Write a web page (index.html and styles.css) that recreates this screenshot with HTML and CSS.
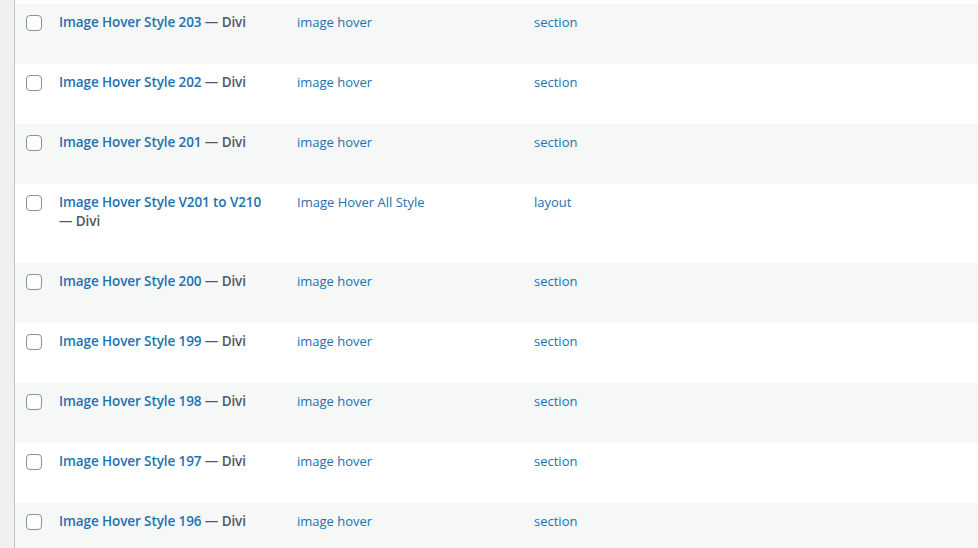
FILE: index.html
```html
<!DOCTYPE html>
<html lang="en">
<head>
    <meta charset="UTF-8">
    <meta name="viewport" content="width=device-width, initial-scale=1.0">
    <title>Divi Library</title>
    <link rel="stylesheet" href="styles.css">
</head>
<body>

<div class="admin-gap"></div>

<div class="list-wrap">
    <div class="list-top"></div>
    <table class="list-table">
        <tbody>
            <tr>
                <td class="check-col"><input type="checkbox"></td>
                <td class="title-col"><a href="#" class="row-title">Image Hover Style 203</a> <span class="post-state">—&nbsp;Divi</span></td>
                <td class="cat-col"><a href="#">image hover</a></td>
                <td class="type-col"><a href="#">section</a></td>
            </tr>
            <tr>
                <td class="check-col"><input type="checkbox"></td>
                <td class="title-col"><a href="#" class="row-title">Image Hover Style 202</a> <span class="post-state">—&nbsp;Divi</span></td>
                <td class="cat-col"><a href="#">image hover</a></td>
                <td class="type-col"><a href="#">section</a></td>
            </tr>
            <tr>
                <td class="check-col"><input type="checkbox"></td>
                <td class="title-col"><a href="#" class="row-title">Image Hover Style 201</a> <span class="post-state">—&nbsp;Divi</span></td>
                <td class="cat-col"><a href="#">image hover</a></td>
                <td class="type-col"><a href="#">section</a></td>
            </tr>
            <tr>
                <td class="check-col"><input type="checkbox"></td>
                <td class="title-col"><a href="#" class="row-title">Image Hover Style V201 to V210</a> <span class="post-state">—&nbsp;Divi</span></td>
                <td class="cat-col"><a href="#">Image Hover All Style</a></td>
                <td class="type-col"><a href="#">layout</a></td>
            </tr>
            <tr>
                <td class="check-col"><input type="checkbox"></td>
                <td class="title-col"><a href="#" class="row-title">Image Hover Style 200</a> <span class="post-state">—&nbsp;Divi</span></td>
                <td class="cat-col"><a href="#">image hover</a></td>
                <td class="type-col"><a href="#">section</a></td>
            </tr>
            <tr>
                <td class="check-col"><input type="checkbox"></td>
                <td class="title-col"><a href="#" class="row-title">Image Hover Style 199</a> <span class="post-state">—&nbsp;Divi</span></td>
                <td class="cat-col"><a href="#">image hover</a></td>
                <td class="type-col"><a href="#">section</a></td>
            </tr>
            <tr>
                <td class="check-col"><input type="checkbox"></td>
                <td class="title-col"><a href="#" class="row-title">Image Hover Style 198</a> <span class="post-state">—&nbsp;Divi</span></td>
                <td class="cat-col"><a href="#">image hover</a></td>
                <td class="type-col"><a href="#">section</a></td>
            </tr>
            <tr>
                <td class="check-col"><input type="checkbox"></td>
                <td class="title-col"><a href="#" class="row-title">Image Hover Style 197</a> <span class="post-state">—&nbsp;Divi</span></td>
                <td class="cat-col"><a href="#">image hover</a></td>
                <td class="type-col"><a href="#">section</a></td>
            </tr>
            <tr>
                <td class="check-col"><input type="checkbox"></td>
                <td class="title-col"><a href="#" class="row-title">Image Hover Style 196</a> <span class="post-state">—&nbsp;Divi</span></td>
                <td class="cat-col"><a href="#">image hover</a></td>
                <td class="type-col"><a href="#">section</a></td>
            </tr>
        </tbody>
    </table>
</div>

</body>
</html>
```

FILE: styles.css
```css
/* Page frame */
html, body {
    margin: 0;
    height: 100%;
}

body {
    display: flex;
    background-color: #f0f0f1;
    font-family: "Open Sans", "Noto Sans", sans-serif;
    overflow: hidden;
}

.admin-gap {
    width: 14px;
    flex-shrink: 0;
}

.list-wrap {
    flex: 1;
    background-color: #fff;
    border-left: 1px solid #c3c4c7;
}

.list-top {
    height: 4px;
}

/* The list table */
.list-table {
    width: 100%;
    border-collapse: collapse;
    table-layout: fixed;
}

.list-table tr:nth-child(odd) {
    background-color: #f6f7f7;
}

.list-table td {
    vertical-align: top;
    padding: 9px 10px 32px;
    font-size: 13px;
    line-height: 19px;
}

.list-table a {
    color: #2271b1;
    text-decoration: none;
}

/* Columns */
.check-col {
    width: 14px;
}

.check-col input {
    appearance: none;
    display: block;
    width: 16px;
    height: 16px;
    margin: 2px 0 0 1px;
    background-color: #fff;
    border: 1px solid #8c8f94;
    border-radius: 4px;
}

.list-table .title-col {
    width: 218px;
    font-size: 13.5px;
    font-weight: 600;
    letter-spacing: -0.1px;
}

.post-state {
    color: #50575e;
}

.cat-col {
    width: 217px;
}
```
